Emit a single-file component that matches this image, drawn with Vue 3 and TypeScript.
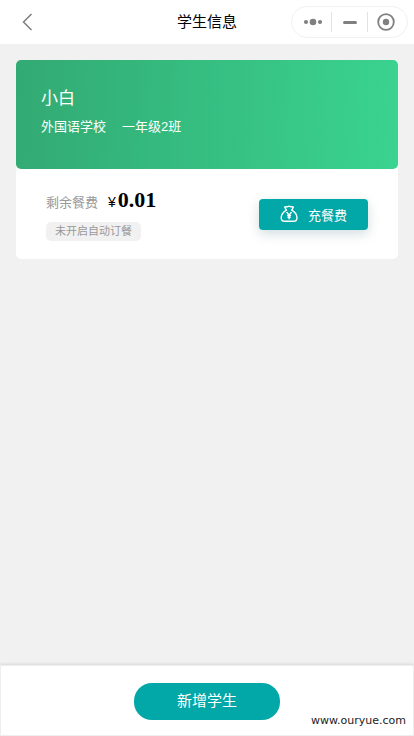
<script setup lang="ts">
import { ref } from 'vue'

interface Student {
  name: string
  school: string
  grade: string
  balance: string
  status: string
}

const students = ref<Student[]>([
  { name: '小白', school: '外国语学校', grade: '一年级2班', balance: '0.01', status: '未开启自动订餐' },
])
</script>

<template>
  <div class="page">
    <header class="navbar">
      <button class="back" type="button" aria-label="返回">
        <svg width="12" height="20" viewBox="0 0 12 20" fill="none" stroke="#7d7d7d" stroke-width="1.5">
          <path d="M9.500 2 1.500 10l8 8" />
        </svg>
      </button>
      <h1 class="title">学生信息</h1>
      <div class="capsule">
        <button type="button" aria-label="更多">
          <svg width="20" height="20" viewBox="0 0 20 20" fill="#808080">
            <circle cx="3" cy="10" r="2.1" />
            <circle cx="10" cy="10" r="3.3" />
            <circle cx="17" cy="10" r="2.1" />
          </svg>
        </button>
        <button type="button" aria-label="最小化">
          <svg width="20" height="20" viewBox="0 0 20 20" fill="#808080">
            <rect x="3" y="9" width="14" height="3" rx="1.5" />
          </svg>
        </button>
        <button type="button" aria-label="关闭">
          <svg width="20" height="20" viewBox="0 0 20 20">
            <circle cx="10" cy="10" r="7.8" fill="none" stroke="#808080" stroke-width="1.8" />
            <circle cx="10" cy="10" r="3.2" fill="#808080" />
          </svg>
        </button>
      </div>
    </header>

    <main class="content">
      <article v-for="student in students" :key="student.name" class="card">
        <div class="banner">
          <h2 class="name">{{ student.name }}</h2>
          <p class="class-info">
            <span>{{ student.school }}</span>
            <span>{{ student.grade }}</span>
          </p>
        </div>
        <div class="account">
          <div>
            <p class="balance">
              <span class="label">剩余餐费</span>
              <span class="currency">¥</span>
              <strong class="amount">{{ student.balance }}</strong>
            </p>
            <span class="tag">{{ student.status }}</span>
          </div>
          <button class="recharge" type="button">
            <svg width="18" height="18" viewBox="0 0 18 18" fill="none" stroke="#fff" stroke-width="1.4" stroke-linejoin="round" stroke-linecap="round">
              <path d="M6.4 5.2 4.6 2C6 1.200 7 2.200 7.800 1.600c.8-.6 1.800-.6 2.600 0C11.200 2.200 12.200 1.200 13.400 2L11.800 5.200" />
              <path d="M6.400 5.200C3.500 7 1.200 9.800 1.200 12.800c0 2.200 1.200 3.500 3.400 3.500h9c2.200 0 3.400-1.300 3.400-3.500 0-3-2.300-5.800-5.200-7.600" />
              <path d="m7 7.500 2.100 2.700 2.100-2.700M9.100 10.200v3.600M7.700 10.600h2.800M8 12.200h2.200" />
            </svg>
            <span>充餐费</span>
          </button>
        </div>
      </article>
    </main>

    <footer class="footer">
      <button class="add" type="button">新增学生</button>
      <span class="watermark">www.ouryue.com</span>
    </footer>
  </div>
</template>

<style>
body {
  margin: 0;
  background: #f1f1f1;
}
</style>

<style scoped>
.page {
  display: flex;
  flex-direction: column;
  min-height: 100vh;
  background: #f1f1f1;
  color: #000;
  font-family: "Liberation Sans", "Noto Sans CJK SC", sans-serif;
}

button {
  margin: 0;
  padding: 0;
  border: 0;
  background: none;
  font-family: inherit;
  cursor: pointer;
}

h1,
h2,
p {
  margin: 0;
  font-weight: 400;
}

svg {
  display: block;
}

.navbar {
  display: grid;
  grid-template-columns: 1fr auto 1fr;
  align-items: center;
  height: 44px;
  padding: 0 6px 0 22px;
  box-sizing: border-box;
  background: #fff;
}

.back {
  justify-self: start;
}

.title {
  margin-left: -16px;
  font-size: 15px;
  line-height: 24px;
}

.capsule {
  display: flex;
  justify-self: end;
  align-items: center;
  width: 117px;
  height: 32px;
  box-sizing: border-box;
  border: 1px solid #f1f1f1;
  border-radius: 16px;
  padding: 0 3px;
}

.capsule button {
  display: flex;
  flex: 1;
  justify-content: center;
}

.capsule button + button {
  border-left: 1px solid #e2e2e2;
}

.content {
  flex: 1;
  padding: 16px;
}

.card {
  border-radius: 5px;
  background: #fff;
}

.banner {
  height: 109px;
  padding: 26px 25px;
  box-sizing: border-box;
  border-radius: 5px;
  background: linear-gradient(92deg, #32aa73, #3ad38f);
  color: #fff;
}

.name {
  font-size: 17px;
  line-height: 26px;
}

.class-info {
  display: flex;
  gap: 16px;
  margin-top: 5px;
  font-size: 13px;
  line-height: 20px;
}

.account {
  display: flex;
  justify-content: space-between;
  align-items: center;
  height: 90px;
  padding: 0 30px;
}

.balance {
  display: flex;
  align-items: baseline;
  line-height: 26px;
}

.label {
  margin-right: 10px;
  color: #999;
  font-size: 13px;
}

.currency {
  margin-right: 2px;
  font-size: 14px;
}

.amount {
  font-family: "Liberation Serif", serif;
  font-size: 22px;
}

.tag {
  display: block;
  width: fit-content;
  margin-top: 6px;
  padding: 0 9px;
  border-radius: 5px;
  background: #f1f1f1;
  color: #999;
  font-size: 11px;
  line-height: 19px;
}

.recharge {
  display: flex;
  align-items: center;
  justify-content: center;
  gap: 10px;
  width: 109px;
  height: 31px;
  border-radius: 4px;
  background: #02a7a7;
  box-shadow: 0 4px 12px rgba(0, 70, 80, 0.18);
  color: #fff;
  font-size: 13px;
}

.footer {
  position: relative;
  display: flex;
  justify-content: center;
  padding: 17px 0 15px;
  border: 1px solid #eee;
  background: #fff;
  box-shadow: 0 -1px 3px rgba(0, 0, 0, 0.1);
}

.add {
  width: 146px;
  height: 37px;
  padding-bottom: 4px;
  border-radius: 18px;
  background: #02a7a7;
  color: #fff;
  font-size: 15px;
}

.watermark {
  position: absolute;
  right: 7px;
  bottom: 6px;
  color: #222;
  font-family: "DejaVu Sans", sans-serif;
  font-size: 11px;
  line-height: 16px;
}
</style>
